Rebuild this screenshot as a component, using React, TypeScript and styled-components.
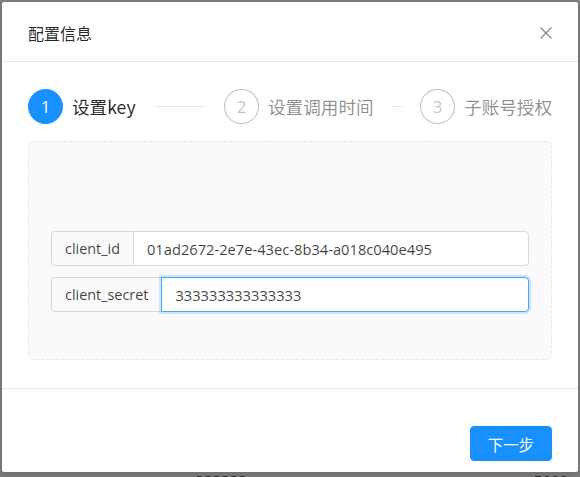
import React from "react";
import styled, { createGlobalStyle } from "styled-components";

const GlobalStyle = createGlobalStyle`
  html, body {
    margin: 0;
    padding: 0;
    background: #7f7f7f;
  }
  body {
    font-family: "Open Sans", "Noto Sans CJK SC", sans-serif;
    -webkit-font-smoothing: antialiased;
  }
  * { box-sizing: border-box; }
`;

const Backdrop = styled.div`
  width: 580px;
  height: 477px;
  overflow: hidden;
  background: #7f7f7f;
  padding: 2px 2px 0 2px;
  display: flex;
  flex-direction: column;
`;

const Modal = styled.div`
  width: 576px;
  background: #fff;
  border-radius: 2px;
  display: flex;
  flex-direction: column;
  box-shadow: 0 4px 12px rgba(0, 0, 0, 0.15);
`;

const Header = styled.div`
  height: 60px;
  padding: 0 26px;
  border-bottom: 1px solid #e8e8e8;
  display: flex;
  align-items: center;
  justify-content: space-between;
`;

const Title = styled.div`
  font-family: "Noto Sans CJK SC", sans-serif;
  font-size: 16px;
  color: rgba(0, 0, 0, 0.85);
  line-height: 24px;
  margin-top: 2px;
`;

const CloseButton = styled.button`
  border: none;
  background: transparent;
  padding: 0;
  width: 12px;
  height: 12px;
  display: flex;
  margin-top: 2px;
  cursor: pointer;
`;

const Body = styled.div`
  padding: 27px 26px 28px;
  display: flex;
  flex-direction: column;
  gap: 17px;
`;

const Steps = styled.div`
  display: flex;
  height: 35px;
`;

const StepItem = styled.div<{ $last?: boolean }>`
  display: flex;
  align-items: center;
  flex: ${(p) => (p.$last ? "none" : "1")};
  margin-right: ${(p) => (p.$last ? "0" : "18px")};
  overflow: hidden;
  min-width: 0;
`;

const StepIcon = styled.div<{ $active?: boolean }>`
  width: 35px;
  height: 35px;
  flex: none;
  border-radius: 50%;
  display: flex;
  align-items: center;
  justify-content: center;
  font-family: "Open Sans", sans-serif;
  font-size: 17px;
  background: ${(p) => (p.$active ? "#1890ff" : "#fff")};
  color: ${(p) => (p.$active ? "#fff" : "rgba(0,0,0,0.25)")};
  border: 1px solid ${(p) => (p.$active ? "#1890ff" : "rgba(0,0,0,0.25)")};
`;

const StepTitle = styled.div<{ $active?: boolean }>`
  margin-left: 9px;
  font-family: "Noto Sans CJK SC", sans-serif;
  font-size: 17.6px;
  line-height: 35px;
  white-space: nowrap;
  color: ${(p) => (p.$active ? "rgba(0,0,0,0.85)" : "rgba(0,0,0,0.45)")};
`;

const StepTail = styled.div`
  flex: 1;
  min-width: 0;
  height: 1px;
  margin-left: 18px;
  background: #e8e8e8;
`;

const FormBox = styled.div`
  height: 219px;
  background: #fafafa;
  border: 1px dashed #e6e6e6;
  border-radius: 6px;
  padding: 89px 22px 0;
  display: flex;
  flex-direction: column;
  gap: 11px;
`;

const InputGroup = styled.div`
  display: flex;
  height: 35px;
`;

const Addon = styled.div`
  flex: none;
  display: flex;
  align-items: center;
  padding: 0 13px;
  background: #fafafa;
  border: 1px solid #d9d9d9;
  border-right: none;
  border-radius: 4px 0 0 4px;
  font-size: 14.4px;
  color: rgba(0, 0, 0, 0.75);
`;

const Input = styled.input<{ $focused?: boolean }>`
  flex: 1;
  min-width: 0;
  height: 35px;
  padding: 0 13px;
  border: 1px solid ${(p) => (p.$focused ? "#40a9ff" : "#d9d9d9")};
  border-radius: 0 4px 4px 0;
  background: #fff;
  font-family: "Open Sans", sans-serif;
  font-size: 14.7px;
  color: rgba(0, 0, 0, 0.75);
  outline: none;
  box-shadow: ${(p) => (p.$focused ? "0 0 0 2px rgba(24,144,255,0.2)" : "none")};
`;

const Footer = styled.div`
  border-top: 1px solid #e8e8e8;
  padding: 37px 26px 11px;
  display: flex;
  justify-content: flex-end;
`;

const PrimaryButton = styled.button`
  height: 35px;
  padding: 0 17px;
  border: 1px solid #1890ff;
  border-radius: 4px;
  background: #1890ff;
  color: #fff;
  font-family: "Noto Sans CJK SC", sans-serif;
  font-size: 15.4px;
  cursor: pointer;
`;

const PageBehind = styled.div`
  display: flex;
  justify-content: space-between;
  padding: 0 5px 0 185px;
  height: 5px;
  margin-top: 0px;
  font-family: "Open Sans", sans-serif;
  font-size: 15px;
  line-height: 20px;
  color: #262626;
  overflow: hidden;
`;

const BehindText = styled.span`
  display: block;
  margin-top: -2px;
`;

const steps = [
  { n: 1, title: "设置key" },
  { n: 2, title: "设置调用时间" },
  { n: 3, title: "子账号授权" },
];

export default function App() {
  return (
    <>
      <GlobalStyle />
      <Backdrop>
        <Modal>
          <Header>
            <Title>配置信息</Title>
            <CloseButton aria-label="close">
              <svg width="12" height="12" viewBox="0 0 12 12">
                <path d="M0.5 0.5 L11.5 11.5 M11.5 0.5 L0.5 11.5" stroke="rgba(0,0,0,0.45)" strokeWidth="1.4" fill="none" />
              </svg>
            </CloseButton>
          </Header>
          <Body>
            <Steps>
              {steps.map((s, i) => {
                const last = i === steps.length - 1;
                const active = i === 0;
                return (
                  <StepItem key={s.n} $last={last}>
                    <StepIcon $active={active}>{s.n}</StepIcon>
                    <StepTitle $active={active}>{s.title}</StepTitle>
                    {!last && <StepTail />}
                  </StepItem>
                );
              })}
            </Steps>
            <FormBox>
              <InputGroup>
                <Addon>client_id</Addon>
                <Input readOnly value="01ad2672-2e7e-43ec-8b34-a018c040e495" />
              </InputGroup>
              <InputGroup>
                <Addon>client_secret</Addon>
                <Input $focused readOnly value="333333333333333" />
              </InputGroup>
            </FormBox>
          </Body>
          <Footer>
            <PrimaryButton>下一步</PrimaryButton>
          </Footer>
        </Modal>
        <PageBehind>
          <BehindText>&lt;333333</BehindText>
          <BehindText>5000-</BehindText>
        </PageBehind>
      </Backdrop>
    </>
  );
}
